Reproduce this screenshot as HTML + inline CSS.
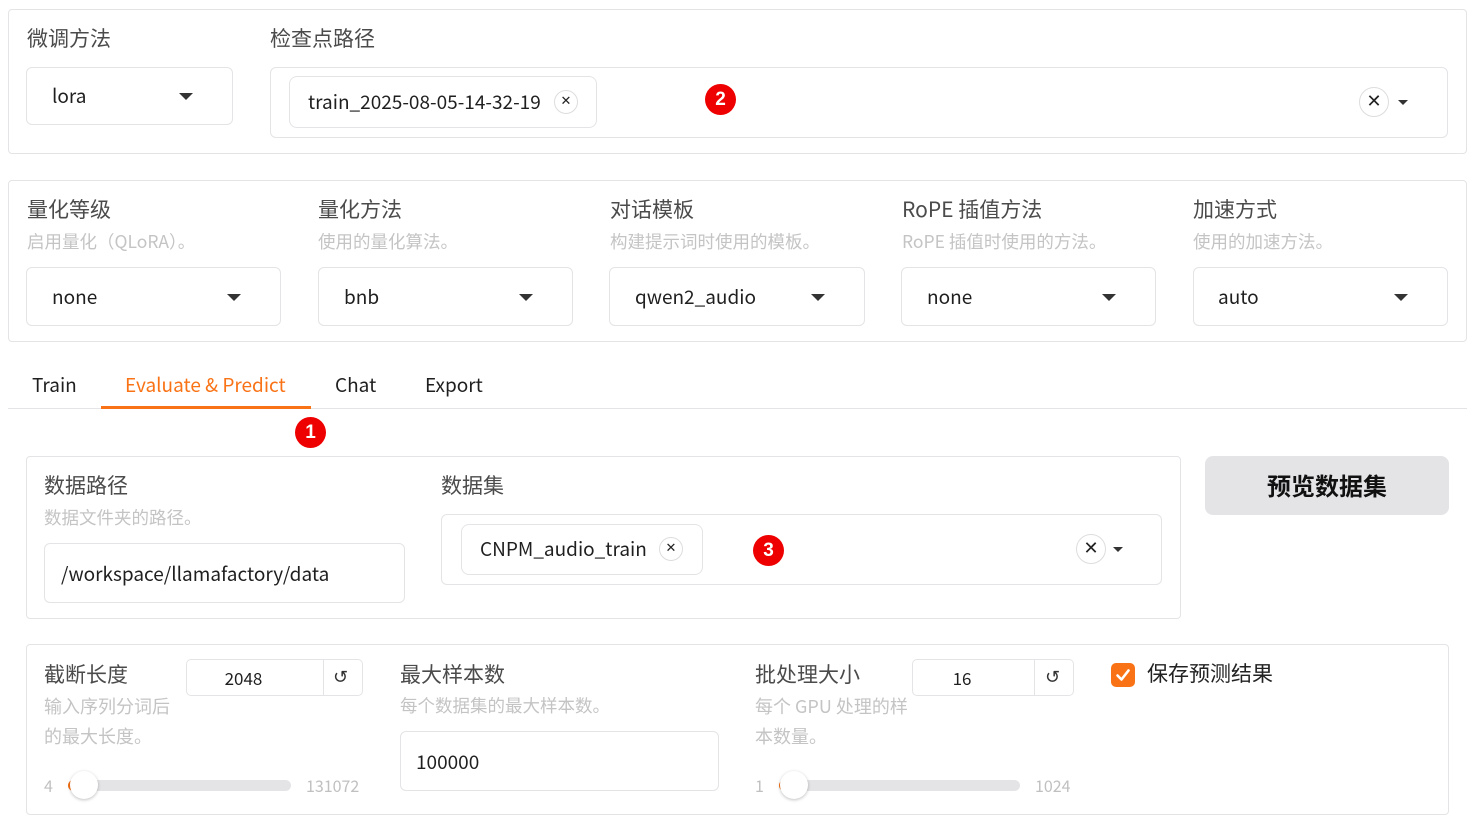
<!DOCTYPE html>
<html><head><meta charset="utf-8"><style>
*{box-sizing:border-box;margin:0;padding:0}
body{width:1472px;height:827px;background:#fff;position:relative;overflow:hidden;font-family:"Liberation Sans","Noto Sans CJK SC",sans-serif;color:#1f1f1f}
.a{position:absolute}
.panel{position:absolute;border:1px solid #e4e4e7;border-radius:4px;background:#fff}
.lab{position:absolute;font-size:21px;color:#4b4b4b;font-family:"Noto Sans CJK SC",sans-serif;line-height:1}
.desc{position:absolute;font-size:17.5px;color:#c4c4c4;font-family:"Noto Sans CJK SC",sans-serif;line-height:1}
.box{position:absolute;border:1px solid #e4e4e7;border-radius:6px;background:#fff}
.val{position:absolute;font-size:19px;color:#1f1f1f;font-family:"Noto Sans CJK SC",sans-serif;line-height:1}
.caret{position:absolute;width:0;height:0;border-left:7px solid transparent;border-right:7px solid transparent;border-top:7px solid #333}
.scaret{position:absolute;width:0;height:0;border-left:5px solid transparent;border-right:5px solid transparent;border-top:5px solid #333}
.badge{position:absolute;width:31px;height:31px;border-radius:50%;background:#ee0000;color:#fff;font-weight:bold;font-size:19px;text-align:center;line-height:31px;font-family:"Liberation Sans",sans-serif}
.clr{position:absolute;border:1px solid #ddd;border-radius:50%;text-align:center;color:#222;font-family:"DejaVu Sans",sans-serif}
.tab{position:absolute;top:374px;font-size:19px;font-family:"Noto Sans CJK SC",sans-serif;line-height:1.2}
.track{position:absolute;height:11px;background:#e4e4e7;border-radius:6px}
.thumb{position:absolute;width:28px;height:28px;border-radius:50%;background:#fff;box-shadow:0 1px 3px rgba(0,0,0,.25)}
.num{position:absolute;font-size:16px;color:#c0c0c0;line-height:1;font-family:"Noto Sans CJK SC",sans-serif}
.spin{position:absolute;text-align:center;font-size:17px;font-family:"Noto Sans CJK SC",sans-serif;line-height:1}
</style></head><body>

<div class="panel" style="left:8px;top:9px;width:1459px;height:145px"></div>
<div class="lab" style="left:27px;top:28px">微调方法</div>
<div class="box" style="left:26px;top:67px;width:207px;height:58px"></div>
<div class="val" style="left:52px;top:86px">lora</div>
<div class="caret" style="left:179px;top:93px"></div>
<div class="lab" style="left:270px;top:28px">检查点路径</div>
<div class="box" style="left:270px;top:67px;width:1178px;height:71px"></div>
<div class="box" style="left:289px;top:76px;width:308px;height:52px;border-radius:8px"></div>
<div class="val" style="left:308px;top:92px">train_2025-08-05-14-32-19</div>
<div class="clr" style="left:554px;top:90px;width:24px;height:24px;font-size:13px;line-height:22px">✕</div>
<div class="badge" style="left:705px;top:84px">2</div>
<div class="clr" style="left:1359px;top:87px;width:30px;height:30px;font-size:18px;line-height:28px">✕</div>
<div class="scaret" style="left:1398px;top:100px"></div>

<div class="panel" style="left:8px;top:180px;width:1459px;height:162px"></div>
<div class="lab" style="left:27px;top:199px">量化等级</div><div class="desc" style="left:27px;top:233px">启用量化（QLoRA）。</div>
<div class="box" style="left:26px;top:267px;width:255px;height:59px"></div><div class="val" style="left:52px;top:287px">none</div><div class="caret" style="left:227px;top:294px"></div>
<div class="lab" style="left:318px;top:199px">量化方法</div><div class="desc" style="left:318px;top:233px">使用的量化算法。</div>
<div class="box" style="left:318px;top:267px;width:255px;height:59px"></div><div class="val" style="left:344px;top:287px">bnb</div><div class="caret" style="left:519px;top:294px"></div>
<div class="lab" style="left:610px;top:199px">对话模板</div><div class="desc" style="left:610px;top:233px">构建提示词时使用的模板。</div>
<div class="box" style="left:609px;top:267px;width:256px;height:59px"></div><div class="val" style="left:635px;top:287px">qwen2_audio</div><div class="caret" style="left:811px;top:294px"></div>
<div class="lab" style="left:902px;top:199px">RoPE 插值方法</div><div class="desc" style="left:902px;top:233px">RoPE 插值时使用的方法。</div>
<div class="box" style="left:901px;top:267px;width:255px;height:59px"></div><div class="val" style="left:927px;top:287px">none</div><div class="caret" style="left:1102px;top:294px"></div>
<div class="lab" style="left:1193px;top:199px">加速方式</div><div class="desc" style="left:1193px;top:233px">使用的加速方法。</div>
<div class="box" style="left:1193px;top:267px;width:255px;height:59px"></div><div class="val" style="left:1218px;top:287px">auto</div><div class="caret" style="left:1394px;top:294px"></div>

<div class="tab" style="left:32px">Train</div>
<div class="tab" style="left:125px;color:#f97316">Evaluate &amp; Predict</div>
<div class="tab" style="left:335px">Chat</div>
<div class="tab" style="left:425px">Export</div>
<div class="a" style="left:8px;top:408px;width:1459px;height:1px;background:#e4e4e7"></div>
<div class="a" style="left:101px;top:406px;width:210px;height:3px;background:#f97316"></div>
<div class="badge" style="left:295px;top:417px">1</div>

<div class="panel" style="left:26px;top:456px;width:1155px;height:163px"></div>
<div class="lab" style="left:44px;top:475px">数据路径</div><div class="desc" style="left:44px;top:509px">数据文件夹的路径。</div>
<div class="box" style="left:44px;top:543px;width:361px;height:60px"></div><div class="val" style="left:61px;top:564px">/workspace/llamafactory/data</div>
<div class="lab" style="left:441px;top:475px">数据集</div>
<div class="box" style="left:441px;top:514px;width:721px;height:71px"></div>
<div class="box" style="left:461px;top:524px;width:242px;height:51px;border-radius:8px"></div>
<div class="val" style="left:480px;top:539px">CNPM_audio_train</div>
<div class="clr" style="left:659px;top:537px;width:24px;height:24px;font-size:13px;line-height:22px">✕</div>
<div class="badge" style="left:753px;top:535px">3</div>
<div class="clr" style="left:1076px;top:534px;width:30px;height:30px;font-size:18px;line-height:28px">✕</div>
<div class="scaret" style="left:1113px;top:547px"></div>
<div class="a" style="left:1205px;top:456px;width:244px;height:59px;background:#e4e4e7;border-radius:8px;text-align:center;line-height:57px;font-size:24px;font-weight:bold;font-family:'Noto Sans CJK SC',sans-serif;color:#111">预览数据集</div>

<div class="panel" style="left:26px;top:644px;width:1423px;height:171px"></div>
<div class="lab" style="left:44px;top:664px">截断长度</div>
<div class="desc" style="left:44px;top:691px;line-height:30px;font-size:18px">输入序列分词后<br>的最大长度。</div>
<div class="box" style="left:186px;top:659px;width:177px;height:37px;border-radius:5px"></div>
<div class="a" style="left:323px;top:659px;width:1px;height:37px;background:#e4e4e7"></div>
<div class="spin" style="left:186px;top:669px;width:115px">2048</div>
<div class="a" style="left:333px;top:667px;font-size:18px;color:#333;font-family:'DejaVu Sans',sans-serif">↺</div>
<div class="num" style="left:44px;top:777px">4</div>
<div class="track" style="left:68px;top:780px;width:223px"></div>
<div class="a" style="left:68px;top:780px;width:10px;height:11px;background:#f97316;border-radius:6px 0 0 6px"></div>
<div class="thumb" style="left:70px;top:771px"></div>
<div class="num" style="left:306px;top:777px">131072</div>

<div class="lab" style="left:400px;top:664px">最大样本数</div>
<div class="desc" style="left:400px;top:697px">每个数据集的最大样本数。</div>
<div class="box" style="left:400px;top:731px;width:319px;height:60px"></div>
<div class="val" style="left:416px;top:752px">100000</div>

<div class="lab" style="left:755px;top:664px">批处理大小</div>
<div class="desc" style="left:755px;top:691px;line-height:30px;font-size:18px">每个 GPU 处理的样<br>本数量。</div>
<div class="box" style="left:912px;top:659px;width:162px;height:37px;border-radius:5px"></div>
<div class="a" style="left:1034px;top:659px;width:1px;height:37px;background:#e4e4e7"></div>
<div class="spin" style="left:912px;top:669px;width:100px">16</div>
<div class="a" style="left:1045px;top:667px;font-size:18px;color:#333;font-family:'DejaVu Sans',sans-serif">↺</div>
<div class="num" style="left:755px;top:777px">1</div>
<div class="track" style="left:779px;top:780px;width:241px"></div>
<div class="a" style="left:779px;top:780px;width:10px;height:11px;background:#f97316;border-radius:6px 0 0 6px"></div>
<div class="thumb" style="left:780px;top:771px"></div>
<div class="num" style="left:1035px;top:777px">1024</div>

<div class="a" style="left:1111px;top:663px;width:24px;height:24px;background:#f97316;border-radius:5px"></div>
<svg class="a" style="left:1111px;top:663px" width="24" height="24"><path d="M6.5 12.5l4 4 7-9" stroke="#fff" stroke-width="2.6" fill="none" stroke-linecap="round" stroke-linejoin="round"/></svg>
<div class="a" style="left:1147px;top:661px;font-size:21px;font-family:'Noto Sans CJK SC',sans-serif;color:#222;line-height:1.2">保存预测结果</div>
</body></html>
